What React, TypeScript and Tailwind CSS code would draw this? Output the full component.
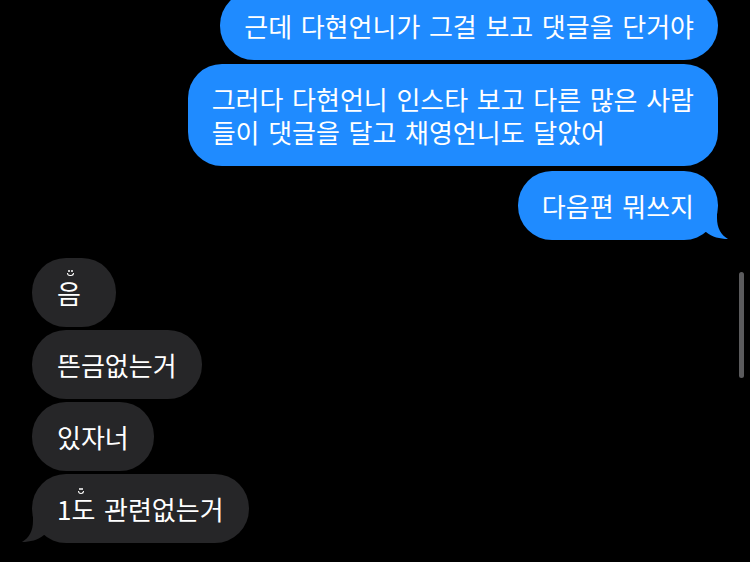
import React from "react";

const font = { fontFamily: '"Noto Sans CJK KR", "Noto Sans", sans-serif', wordSpacing: "2.8px" };

function BlueTail() {
  return (
    <svg
      className="absolute right-[-13px] bottom-[0px]"
      width="34"
      height="36"
      viewBox="0 0 34 36"
    >
      <path
        d="M20 0 L20 14 C20 24 24 31 31 35 C23 35 15 33 9 28 L0 28 L0 0 Z"
        fill="#1f8bff"
      />
    </svg>
  );
}

function GrayTail() {
  return (
    <svg
      className="absolute left-[-13px] bottom-[0px]"
      width="34"
      height="36"
      viewBox="0 0 34 36"
    >
      <path
        d="M14 0 L14 14 C14 24 10 31 3 35 C11 35 19 33 25 28 L34 28 L34 0 Z"
        fill="#262628"
      />
    </svg>
  );
}

function Face({ className }: { className: string }) {
  return (
    <span className={`absolute flex flex-col items-center ${className}`}>
      <span className="flex w-full justify-between px-[1px]">
        <span className="h-[2px] w-[2px] rounded-full bg-white" />
        <span className="h-[2px] w-[2px] rounded-full bg-white" />
      </span>
      <span className="mt-[1px] h-[3px] w-full rounded-b-full border-[1.5px] border-t-0 border-white" />
    </span>
  );
}

function Blue({ children, tail, className = "" }: { children: React.ReactNode; tail?: boolean; className?: string }) {
  return (
    <div className={`relative self-end rounded-[34px] bg-[#1f8bff] py-[18px] pl-[24px] pr-[24px] text-[26px] leading-[33px] text-white whitespace-nowrap ${className}`}>
      {children}
      {tail && <BlueTail />}
    </div>
  );
}

function Gray({ children, tail, className = "" }: { children: React.ReactNode; tail?: boolean; className?: string }) {
  return (
    <div className={`relative self-start rounded-[34px] bg-[#262628] py-[18px] pl-[25px] text-[26px] leading-[33px] text-white whitespace-nowrap ${className}`}>
      {children}
      {tail && <GrayTail />}
    </div>
  );
}

export default function App() {
  return (
    <div className="relative h-[562px] w-[750px] overflow-hidden bg-black" style={font}>
      <div className="flex flex-col pl-[32px] pr-[32px] mt-[-9px]">
        <Blue>근데 다현언니가 그걸 보고 댓글을 단거야</Blue>
        <Blue className="mt-[4px]">
          <div>그러다 다현언니 인스타 보고 다른 많은 사람</div>
          <div>들이 댓글을 달고 채영언니도 달았어</div>
        </Blue>
        <Blue className="mt-[5px]" tail>
          다음편 뭐쓰지
        </Blue>
        <Gray className="mt-[18px] pr-[35px]">
          음
          <Face className="left-[35px] top-[12px] w-[7px]" />
        </Gray>
        <Gray className="mt-[3px] pr-[25px]">뜬금없는거</Gray>
        <Gray className="mt-[3px] pr-[25px]">있자너</Gray>
        <Gray className="mt-[3px] pr-[25px]" tail>
          1도 관련없는거
          <Face className="left-[46px] top-[14px] w-[6px]" />
        </Gray>
      </div>
      <div className="absolute right-[6px] top-[272px] h-[106px] w-[5px] rounded-full bg-[#5b5b5d]" />
    </div>
  );
}
